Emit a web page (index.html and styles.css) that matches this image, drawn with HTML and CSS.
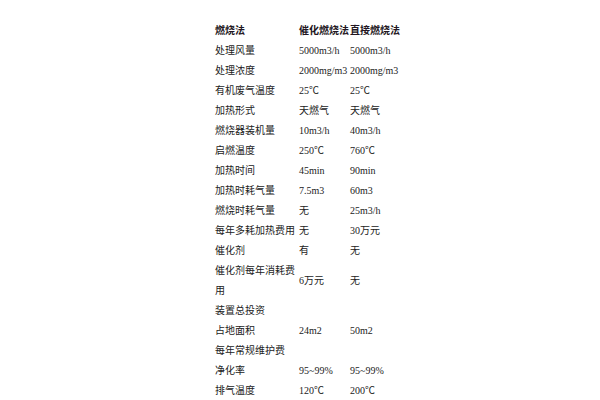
FILE: index.html
```html
<!DOCTYPE html>
<html lang="zh-CN">
<head>
<meta charset="utf-8">
<title>燃烧法对比</title>
<link rel="stylesheet" href="styles.css">
</head>
<body>
<main class="page">
  <table class="cmp">
    <colgroup>
      <col class="c1"><col class="c2"><col class="c3">
    </colgroup>
    <thead>
      <tr><th>燃烧法</th><th>催化燃烧法</th><th>直接燃烧法</th></tr>
    </thead>
    <tbody>
      <tr><td>处理风量</td><td>5000m3/h</td><td>5000m3/h</td></tr>
      <tr><td>处理浓度</td><td>2000mg/m3</td><td>2000mg/m3</td></tr>
      <tr><td>有机废气温度</td><td>25<span class="cjk">℃</span></td><td>25<span class="cjk">℃</span></td></tr>
      <tr><td>加热形式</td><td>天燃气</td><td>天燃气</td></tr>
      <tr><td>燃烧器装机量</td><td>10m3/h</td><td>40m3/h</td></tr>
      <tr><td>启燃温度</td><td>250<span class="cjk">℃</span></td><td>760<span class="cjk">℃</span></td></tr>
      <tr><td>加热时间</td><td>45min</td><td>90min</td></tr>
      <tr><td>加热时耗气量</td><td>7.5m3</td><td>60m3</td></tr>
      <tr><td>燃烧时耗气量</td><td>无</td><td>25m3/h</td></tr>
      <tr><td>每年多耗加热费用</td><td>无</td><td>30万元</td></tr>
      <tr><td>催化剂</td><td>有</td><td>无</td></tr>
      <tr><td>催化剂每年消耗费用</td><td>6万元</td><td>无</td></tr>
      <tr><td>装置总投资</td><td></td><td></td></tr>
      <tr><td>占地面积</td><td>24m2</td><td>50m2</td></tr>
      <tr><td>每年常规维护费</td><td></td><td></td></tr>
      <tr><td>净化率</td><td>95~99%</td><td>95~99%</td></tr>
      <tr><td>排气温度</td><td>120<span class="cjk">℃</span></td><td>200<span class="cjk">℃</span></td></tr>
    </tbody>
  </table>
</main>
</body>
</html>
```
FILE: styles.css
```css
html, body {
  margin: 0;
  padding: 0;
  background: #ffffff;
}
.page {
  padding: 21px 0 0 215px;
}
.cmp {
  border-collapse: collapse;
  table-layout: fixed;
  width: 186px;
  font-family: "Liberation Serif", "Noto Sans CJK SC", serif;
  font-size: 10px;
  color: #222222;
}
.c1 { width: 84px; }
.c2 { width: 51px; }
.c3 { width: 51px; }
.cmp th,
.cmp td {
  padding: 0;
  height: 20px;
  line-height: 20px;
  text-align: left;
  vertical-align: middle;
  word-break: break-all;
}
.cmp th {
  font-weight: bold;
  color: #231622;
  white-space: nowrap;
}
.cjk {
  font-family: "Noto Sans CJK SC", sans-serif;
  line-height: 10px;
}
```
